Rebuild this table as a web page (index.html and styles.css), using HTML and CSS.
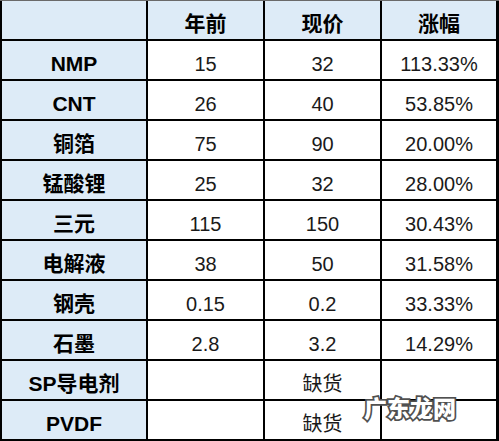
FILE: index.html
```html
<!DOCTYPE html>
<html lang="zh">
<head>
<meta charset="utf-8">
<link rel="stylesheet" href="styles.css">
</head>
<body>
<div class="sheet">
  <div class="grid">
    <div class="cell head"></div>
    <div class="cell head">年前</div>
    <div class="cell head">现价</div>
    <div class="cell head">涨幅</div>

    <div class="cell name">NMP</div>
    <div class="cell">15</div>
    <div class="cell">32</div>
    <div class="cell">113.33%</div>

    <div class="cell name">CNT</div>
    <div class="cell">26</div>
    <div class="cell">40</div>
    <div class="cell">53.85%</div>

    <div class="cell name">铜箔</div>
    <div class="cell">75</div>
    <div class="cell">90</div>
    <div class="cell">20.00%</div>

    <div class="cell name">锰酸锂</div>
    <div class="cell">25</div>
    <div class="cell">32</div>
    <div class="cell">28.00%</div>

    <div class="cell name">三元</div>
    <div class="cell">115</div>
    <div class="cell">150</div>
    <div class="cell">30.43%</div>

    <div class="cell name">电解液</div>
    <div class="cell">38</div>
    <div class="cell">50</div>
    <div class="cell">31.58%</div>

    <div class="cell name">钢壳</div>
    <div class="cell">0.15</div>
    <div class="cell">0.2</div>
    <div class="cell">33.33%</div>

    <div class="cell name">石墨</div>
    <div class="cell">2.8</div>
    <div class="cell">3.2</div>
    <div class="cell">14.29%</div>

    <div class="cell name">SP导电剂</div>
    <div class="cell"></div>
    <div class="cell">缺货</div>
    <div class="cell"></div>

    <div class="cell name">PVDF</div>
    <div class="cell"></div>
    <div class="cell">缺货</div>
    <div class="cell"></div>
  </div>
  <div class="watermark">广东龙网</div>
</div>
</body>
</html>
```
FILE: styles.css
```css
html, body {
  margin: 0;
  padding: 0;
  background: #ffffff;
}
.sheet {
  position: relative;
  width: 499px;
  height: 441px;
  overflow: hidden;
}
.grid {
  display: grid;
  grid-template-columns: 144px 115px 115px 114px;
  grid-template-rows: repeat(11, 38px);
  gap: 2px;
  background: #000000;
  padding: 0 3px 2px 2px;
  border-top: 1px solid #6a6a6a;
  width: 494px;
  font-family: "Liberation Sans", "Noto Sans CJK SC", sans-serif;
  color: #1a1a1a;
}
.cell {
  background: #ffffff;
  display: flex;
  align-items: center;
  justify-content: center;
  padding-top: 7px;
  box-sizing: border-box;
  font-size: 20px;
  line-height: 1;
  white-space: nowrap;
}
.head, .name {
  background: #ddebf7;
  font-weight: bold;
  font-size: 21px;
  color: #000000;
}
.watermark {
  position: absolute;
  left: 364px;
  top: 396px;
  font-family: "Noto Sans CJK SC", sans-serif;
  font-weight: 900;
  font-size: 23px;
  line-height: 1;
  color: #ffffff;
  -webkit-text-stroke: 3.5px #505050;
  paint-order: stroke fill;
}
```
